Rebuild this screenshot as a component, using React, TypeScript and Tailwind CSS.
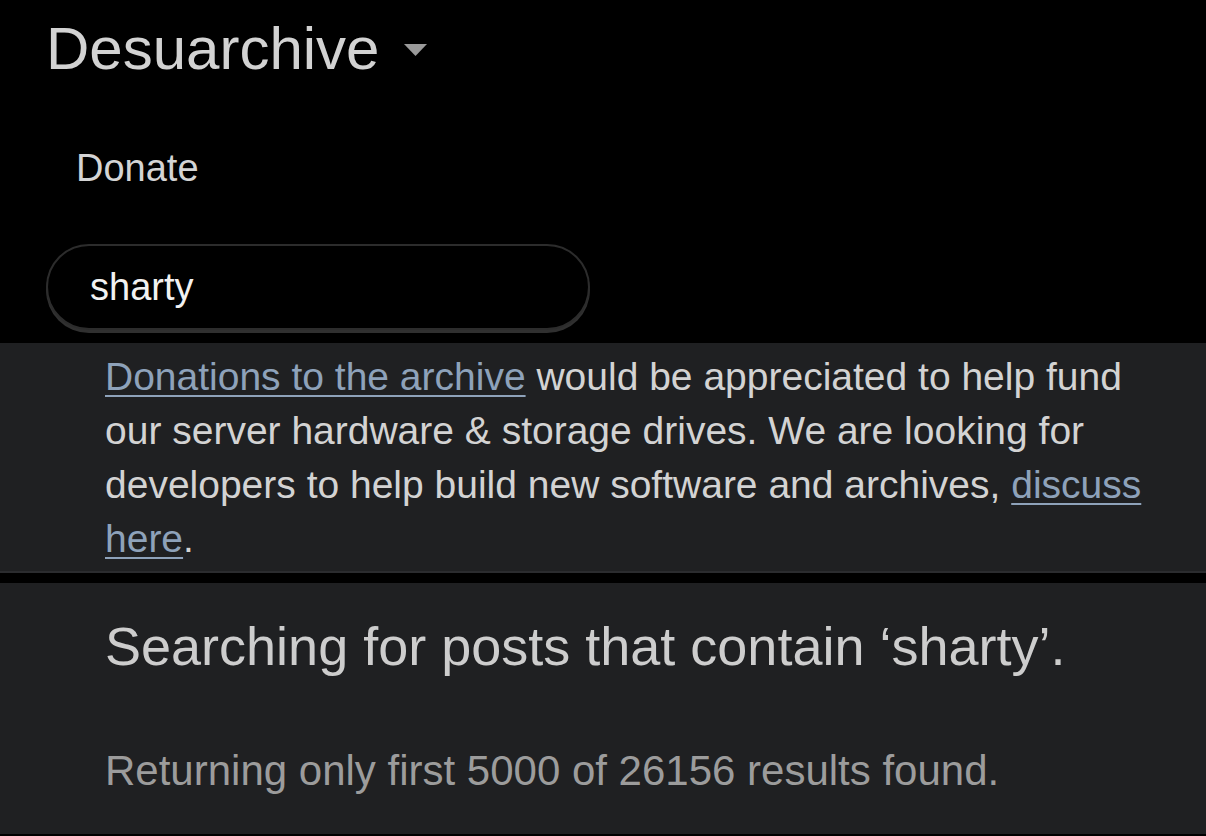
import React from 'react';

const font = { fontFamily: '"Liberation Sans", Arial, sans-serif' };

const App = () => {
    return (
        <div className="min-h-[836px] bg-black" style={font}>
            {/* header */}
            <div className="px-[46px] pt-[19px]">
                <div className="flex items-center">
                    <h1 className="text-[60px] leading-[60px] text-[#d2d2d2]">Desuarchive</h1>
                    <svg className="ml-[24px] mt-[2px]" width="23" height="12" viewBox="0 0 23 12">
                        <polygon points="0,0 23,0 11.5,12" fill="#9a9a9a" />
                    </svg>
                </div>
                <div className="mt-[70px] pl-[30px] text-[38px] leading-[38px] text-[#d4d4d4]">
                    Donate
                </div>
                <div className="mt-[57px] flex h-[86px] w-[544px] items-center rounded-full border-2 border-[#2c2c2c] bg-black pl-[42px] shadow-[0_3px_0_#303030]">
                    <input
                        className="w-full bg-transparent text-[38px] text-[#f2f2f2] outline-none"
                        style={font}
                        defaultValue="sharty"
                    />
                </div>
            </div>

            {/* donation notice */}
            <div className="mt-[13px] border-b-2 border-[#2b2c2f] bg-[#1f2022] pb-[5px] pl-[105px] pr-[46px] pt-[7px]">
                <p className="text-[39px] leading-[54px] text-[#d3d3d3]">
                    <a href="#donate" className="text-[#8ea2ba] underline decoration-2 underline-offset-[5px]">Donations to the archive</a>{' '}
                    would be appreciated to help fund our server hardware &amp; storage drives. We are looking for developers to help build new software and archives,{' '}
                    <a href="#discuss" className="text-[#8ea2ba] underline decoration-2 underline-offset-[5px]">discuss here</a>.
                </p>
            </div>

            {/* search results */}
            <div className="mt-[10px] h-[251px] bg-[#1f2022] pl-[105px] pt-[36px]">
                <h2 className="text-[54px] leading-[54px] text-[#cdcdcd]">
                    Searching for posts that contain ‘sharty’.
                </h2>
                <p className="mt-[77px] text-[42px] leading-[42px] text-[#9c9c9c]">
                    Returning only first 5000 of 26156 results found.
                </p>
            </div>
        </div>
    );
};

export default App;
